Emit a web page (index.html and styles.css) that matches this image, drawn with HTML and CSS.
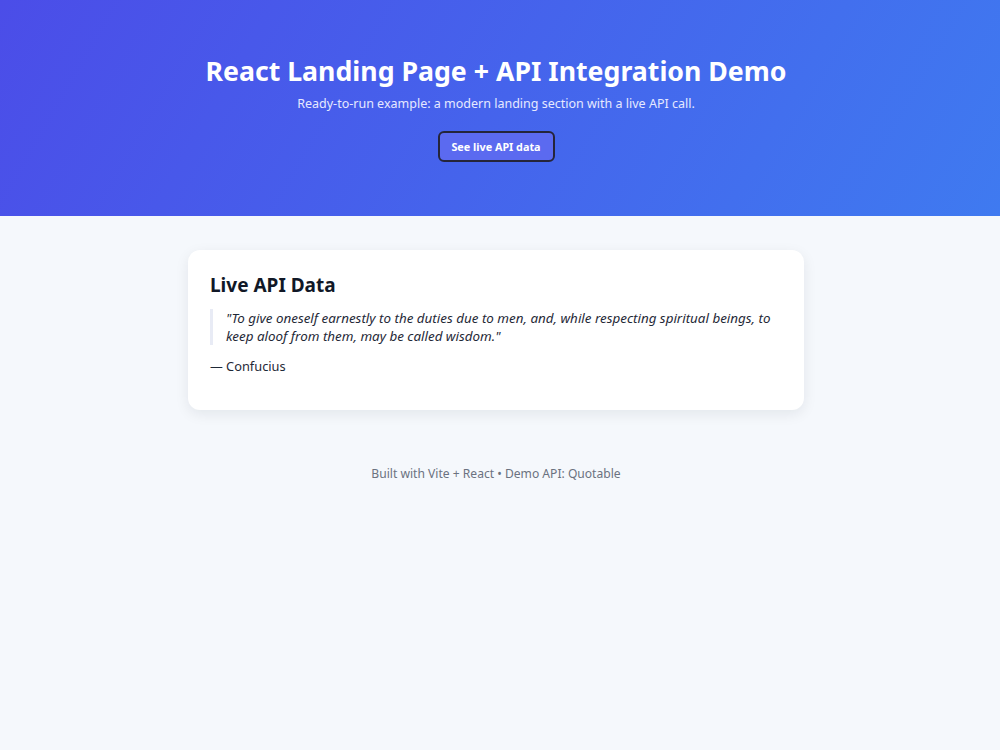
FILE: index.html
```html
<!DOCTYPE html>
<html lang="en">
<head>
<meta charset="utf-8">
<title>React Landing Page + API Integration Demo</title>
<link rel="stylesheet" href="styles.css">
</head>
<body>
  <header class="hero">
    <h1 class="hero-title">React Landing Page + API Integration Demo</h1>
    <p class="hero-sub">Ready-to-run example: a modern landing section with a live API call.</p>
    <button class="hero-btn" type="button">See live API data</button>
  </header>

  <main class="content">
    <section class="card">
      <h2 class="card-title">Live API Data</h2>
      <blockquote class="quote">"To give oneself earnestly to the duties due to men, and, while respecting spiritual beings, to keep aloof from them, may be called wisdom."</blockquote>
      <p class="author">— Confucius</p>
    </section>
  </main>

  <footer class="footer">Built with Vite + React • Demo API: Quotable</footer>
</body>
</html>
```

FILE: styles.css
```css
* {
  box-sizing: border-box;
}

html, body {
  margin: 0;
  padding: 0;
}

body {
  font-family: "Noto Sans", "Open Sans", sans-serif;
  background: #f5f8fc;
  color: #111827;
  min-height: 750px;
}

/* centred columns sit a little left of the window centre */
.hero,
.content,
.footer {
  padding-right: 8px;
}

.hero {
  height: 216px;
  background: linear-gradient(120deg, #4b4de8 0%, #3f7af0 100%);
  color: #ffffff;
  display: flex;
  flex-direction: column;
  align-items: center;
  padding-top: 53px;
}

.hero-title {
  margin: 0;
  font-size: 26.7px;
  font-weight: 700;
  line-height: 36px;
}

.hero-sub {
  margin: 5px 0 0;
  font-size: 12.5px;
  line-height: 20px;
  color: #e6e9ff;
}

.hero-btn {
  margin-top: 17px;
  width: 117px;
  height: 31px;
  border: 2px solid #25253a;
  border-radius: 6px;
  background: #5b6af0;
  color: #ffffff;
  font-family: inherit;
  font-size: 10.8px;
  font-weight: 700;
  cursor: pointer;
}

.content {
  display: flex;
  justify-content: center;
  padding-top: 34px;
}

.card {
  width: 616px;
  min-height: 160px;
  background: #ffffff;
  border-radius: 12px;
  box-shadow: 0 4px 14px rgba(15, 23, 42, 0.08);
  padding: 22px 22px 24px;
}

.card-title {
  margin: 0;
  font-size: 19px;
  font-weight: 700;
  line-height: 26px;
  color: #111827;
}

.quote {
  margin: 11px 0 0;
  padding: 0 0 0 13px;
  border-left: 3px solid #e8ebf5;
  font-style: italic;
  font-size: 13.4px;
  line-height: 18px;
  color: #1f2937;
}

.author {
  margin: 11px 0 0;
  font-size: 12.8px;
  line-height: 20px;
  color: #1f2937;
}

.footer {
  text-align: center;
  margin-top: 55px;
  font-size: 12.1px;
  color: #6b7280;
}
```
